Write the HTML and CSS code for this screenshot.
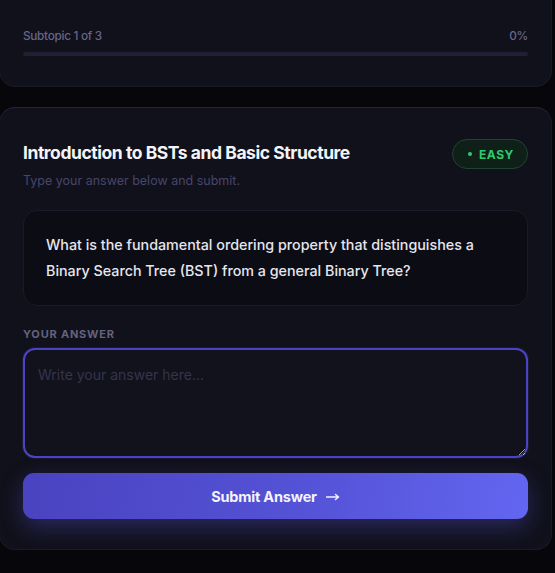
FILE: index.html
```html
<!DOCTYPE html>
<html lang="en">
<head>
<meta charset="utf-8">
<title>Subtopic quiz</title>
<link rel="stylesheet" href="styles.css">
</head>
<body>
<main class="page">
  <section class="card card-progress">
    <div class="progress-row">
      <span>Subtopic 1 of 3</span>
      <span>0%</span>
    </div>
    <div class="progress-track"><div class="progress-fill" style="width:0%"></div></div>
  </section>

  <section class="card card-question">
    <header class="q-header">
      <div class="q-titles">
        <h1 class="q-title">Introduction to BSTs and Basic Structure</h1>
        <p class="q-sub">Type your answer below and submit.</p>
      </div>
      <span class="badge"><span class="badge-dot"></span>EASY</span>
    </header>

    <div class="q-box">
      What is the fundamental ordering property that distinguishes a Binary Search Tree (BST) from a general Binary Tree?
    </div>

    <label class="answer-label" for="answer">YOUR ANSWER</label>
    <textarea id="answer" class="answer" placeholder="Write your answer here..."></textarea>

    <button class="submit" type="button">Submit Answer
      <svg class="arrow" width="14" height="8" viewBox="0 0 14 8" aria-hidden="true">
        <path d="M0.5 4H12.5M9.5 1.5L12.5 4L9.5 6.5" fill="none" stroke="currentColor" stroke-width="1.5" stroke-linecap="round" stroke-linejoin="round"/>
      </svg>
    </button>
  </section>
</main>
</body>
</html>
```

FILE: styles.css
```css
* { box-sizing: border-box; }

html, body {
  margin: 0;
  padding: 0;
  background: #07070b;
  font-family: Inter, "Noto Sans", "Liberation Sans", sans-serif;
  overflow: hidden;
}

.page {
  display: flex;
  flex-direction: column;
  gap: 20px;
  width: 553px;
  margin-left: -1px;
}

.card {
  background: #11111b;
  border: 1px solid #1b1a2a;
  border-radius: 16px;
  padding: 0 23px;
}

.card-progress {
  margin-top: -40px;
  padding-top: 67px;
  padding-bottom: 30px;
}

.progress-row {
  display: flex;
  justify-content: space-between;
  font-size: 11.8px;
  line-height: 16px;
  color: #67658a;
  font-weight: 500;
  letter-spacing: -0.3px;
}

.progress-track {
  margin-top: 8px;
  height: 4px;
  border-radius: 2px;
  background: #201f33;
}

.progress-fill {
  height: 100%;
  background: #6366f1;
  border-radius: 2px;
}

.card-question {
  padding-top: 33px;
  padding-bottom: 30px;
  border-top-color: #25234a;
}

.q-header {
  display: flex;
  justify-content: space-between;
  align-items: flex-start;
}

.q-title {
  margin: 0;
  font-size: 17.5px;
  line-height: 24px;
  font-weight: 700;
  color: #f4f4f8;
  letter-spacing: -0.45px;
}

.q-sub {
  margin: 7px 0 0;
  font-size: 12.5px;
  line-height: 18px;
  color: #47456a;
}

.badge {
  margin-top: -2px;
  display: inline-flex;
  align-items: center;
  gap: 7px;
  height: 30px;
  padding: 0 13px 0 15px;
  border-radius: 15px;
  background: #0f2019;
  border: 1px solid #1e4533;
  color: #31c96e;
  font-size: 12px;
  font-weight: 700;
  letter-spacing: 0.6px;
}

.badge-dot {
  width: 4px;
  height: 4px;
  border-radius: 50%;
  background: #31c96e;
}

.q-box {
  margin-top: 20px;
  padding: 21px 22px 22px;
  background: #0c0c14;
  border: 1px solid #1b1a2a;
  border-radius: 14px;
  font-size: 14.3px;
  line-height: 25.5px;
  color: #e6e6ee;
  font-weight: 500;
}

.answer-label {
  display: block;
  margin-top: 21px;
  font-size: 11px;
  line-height: 14px;
  font-weight: 700;
  letter-spacing: 0.8px;
  color: #64627e;
}

.answer {
  display: block;
  width: 100%;
  height: 110px;
  margin-top: 7px;
  padding: 15px 13px;
  background: #12121d;
  border: 2px solid #4b44c2;
  border-radius: 12px;
  font-family: inherit;
  font-size: 14px;
  line-height: 20px;
  color: #e6e6ee;
  outline: none;
  box-shadow: 0 0 0 1px rgba(99, 102, 241, 0.12);
}

.answer::placeholder {
  color: #35344b;
}

.submit {
  display: flex;
  align-items: center;
  justify-content: center;
  gap: 9px;
  width: 100%;
  height: 46px;
  margin-top: 15px;
  border: none;
  border-radius: 11px;
  background: linear-gradient(100deg, #4a43c0 0%, #5452d6 55%, #6366f1 100%);
  box-shadow: 0 8px 22px rgba(88, 86, 220, 0.35);
  font-family: inherit;
  font-size: 14.5px;
  font-weight: 700;
  color: #f3f3fb;
  letter-spacing: -0.2px;
}

.arrow {
  display: block;
  margin-top: 1px;
}
```
